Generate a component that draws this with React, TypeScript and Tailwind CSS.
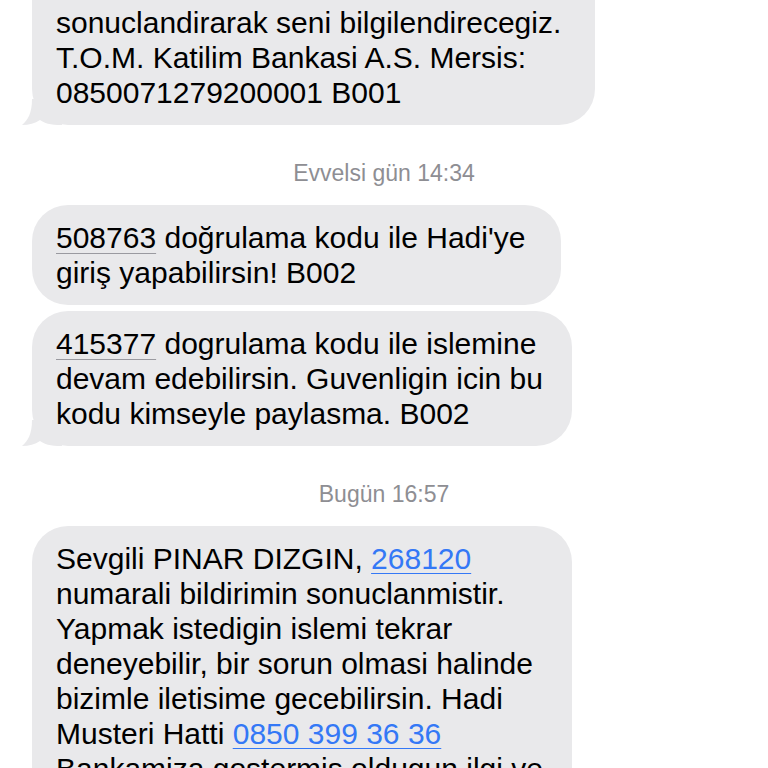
import React from 'react';

const font = { fontFamily: '"Liberation Sans", Arial, sans-serif' };

function Tail() {
  return (
    <svg
      className="absolute left-[-10px] bottom-0"
      width="40"
      height="26"
      viewBox="0 0 40 26"
    >
      <path
        d="M10 0 C10 14 6 21 0 26 C7 26 13 24.5 18 21 C22 24 28 26 40 26 L40 0 Z"
        fill="#e9e9eb"
      />
    </svg>
  );
}

function Bubble({
  className,
  tail,
  children,
}: {
  className: string;
  tail?: boolean;
  children: React.ReactNode;
}) {
  return (
    <div className={`relative bg-[#e9e9eb] text-black text-[30px] leading-[35px] px-[24px] whitespace-nowrap ${className}`}>
      {tail && <Tail />}
      <div className="relative">{children}</div>
    </div>
  );
}

function Stamp({ children }: { children: React.ReactNode }) {
  return (
    <div className="text-center text-[23px] leading-[26px] text-[#8e8e93]">{children}</div>
  );
}

export default function App() {
  return (
    <div className="w-[768px] h-[768px] overflow-hidden bg-white" style={font}>
      <div className="flex flex-col items-start pl-[32px]">
        <Bubble tail className="w-[563px] pt-[5px] pb-[15px] rounded-b-[36px]">
          sonuclandirarak seni bilgilendirecegiz.
          <br />
          T.O.M. Katilim Bankasi A.S. Mersis:
          <br />
          0850071279200001 B001
        </Bubble>

        <div className="w-[704px] mt-[35px] mb-[19px]">
          <Stamp>Evvelsi gün 14:34</Stamp>
        </div>

        <Bubble className="w-[529px] py-[15px] rounded-[36px]">
          <span className="underline decoration-[#9a9aa0] decoration-1 underline-offset-[5px]">508763</span> doğrulama kodu ile Hadi'ye
          <br />
          giriş yapabilirsin! B002
        </Bubble>

        <Bubble tail className="w-[540px] mt-[6px] py-[15px] rounded-[36px]">
          <span className="underline decoration-[#9a9aa0] decoration-1 underline-offset-[5px]">415377</span> dogrulama kodu ile islemine
          <br />
          devam edebilirsin. Guvenligin icin bu
          <br />
          kodu kimseyle paylasma. B002
        </Bubble>

        <div className="w-[704px] mt-[35px] mb-[19px]">
          <Stamp>Bugün 16:57</Stamp>
        </div>

        <Bubble className="w-[540px] py-[15px] rounded-[36px]">
          Sevgili PINAR DIZGIN,{' '}
          <span className="text-[#3478f6] underline decoration-1 underline-offset-[4px]">268120</span>
          <br />
          numarali bildirimin sonuclanmistir.
          <br />
          Yapmak istedigin islemi tekrar
          <br />
          deneyebilir, bir sorun olmasi halinde
          <br />
          bizimle iletisime gecebilirsin. Hadi
          <br />
          Musteri Hatti{' '}
          <span className="text-[#3478f6] underline decoration-1 underline-offset-[4px]">0850 399 36 36</span>
          <br />
          Bankamiza gostermis oldugun ilgi ve
          <br />
          icin tesekkur ederiz.
        </Bubble>
      </div>
    </div>
  );
}
